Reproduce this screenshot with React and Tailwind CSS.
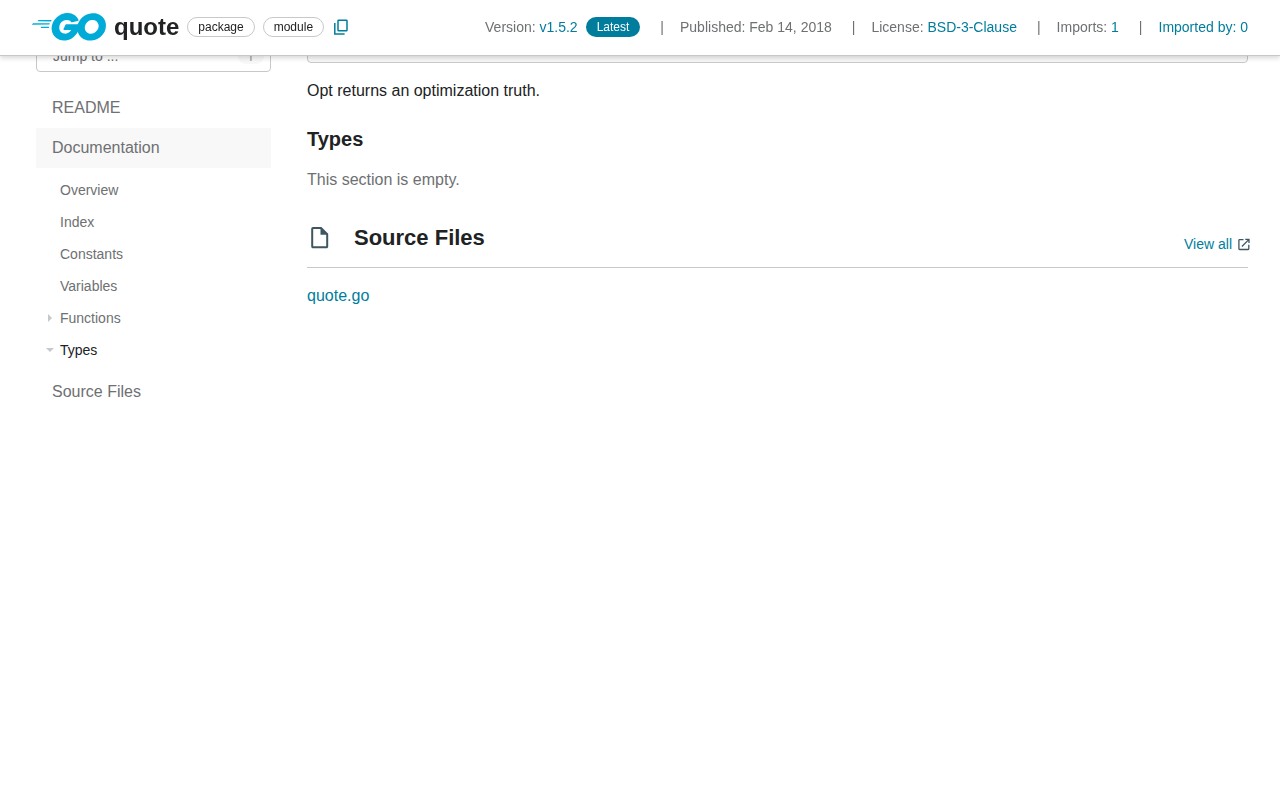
import React from "react";

function GoLogo() {
  return (
    <svg className="w-[74px] h-[28px]" viewBox="24.7 78.4 205.6 76.8" fill="#00acd7" aria-hidden="true">
      <path d="M40.2,101.1c-0.4,0-0.5-0.2-0.3-0.5l2.1-2.7c0.2-0.3,0.7-0.5,1.1-0.5l35.7,0c0.4,0,0.5,0.3,0.3,0.6l-1.7,2.6c-0.2,0.3-0.7,0.6-1,0.6L40.2,101.1z" />
      <path d="M25.1,110.3c-0.4,0-0.5-0.2-0.3-0.5l2.1-2.7c0.2-0.3,0.7-0.5,1.1-0.5l45.6,0c0.4,0,0.6,0.3,0.5,0.6l-0.8,2.4c-0.1,0.4-0.5,0.6-0.9,0.6L25.1,110.3z" />
      <path d="M49.3,119.5c-0.4,0-0.5-0.3-0.3-0.6l1.4-2.5c0.2-0.3,0.6-0.6,1-0.6l20,0c0.4,0,0.6,0.3,0.6,0.7l-0.2,2.4c0,0.4-0.4,0.7-0.7,0.7L49.3,119.5z" />
      <path d="M153.1,99.3c-6.3,1.6-10.6,2.8-16.8,4.4c-1.5,0.4-1.6,0.5-2.9-1c-1.5-1.7-2.6-2.8-4.7-3.8c-6.3-3.1-12.4-2.2-18.1,1.5c-6.8,4.4-10.3,10.9-10.2,19c0.1,8,5.6,14.6,13.5,15.7c6.8,0.9,12.5-1.5,17-6.6c0.9-1.1,1.7-2.3,2.7-3.7c-3.6,0-8.1,0-19.3,0c-2.1,0-2.6-1.3-1.9-3c1.3-3.1,3.7-8.3,5.1-10.9c0.3-0.6,1-1.6,2.5-1.6c5.1,0,23.9,0,36.4,0c-0.2,2.7-0.2,5.4-0.6,8.1c-1.1,7.2-3.8,13.8-8.2,19.6c-7.2,9.5-16.6,15.4-28.5,17c-9.8,1.3-18.9-0.6-26.9-6.6c-7.4-5.6-11.6-13-12.7-22.2c-1.3-10.9,1.9-20.7,8.5-29.3c7.1-9.3,16.5-15.2,28-17.3c9.4-1.7,18.4-0.6,26.5,4.9c5.3,3.5,9.1,8.3,11.6,14.1C154.7,98.5,154.3,99,153.1,99.3z" />
      <path d="M186.2,154.6c-9.1-0.2-17.4-2.8-24.4-8.8c-5.9-5.1-9.6-11.6-10.8-19.3c-1.8-11.3,1.3-21.3,8.1-30.2c7.3-9.6,16.1-14.6,28-16.7c10.2-1.8,19.8-0.8,28.5,5.1c7.9,5.4,12.8,12.7,14.1,22.3c1.7,13.5-2.2,24.5-11.5,33.9c-6.6,6.7-14.7,10.9-24,12.8C191.5,154.2,188.8,154.3,186.2,154.6z M210,114.2c-0.1-1.3-0.1-2.3-0.3-3.3c-1.8-9.9-10.9-15.5-20.4-13.3c-9.3,2.1-15.3,8-17.5,17.4c-1.8,7.8,2,15.7,9.2,18.9c5.5,2.4,11,2.1,16.3-0.6C205.2,129.2,209.5,122.8,210,114.2z" />
    </svg>
  );
}

function Link({ children }) {
  return <a href="#" className="text-[#007d9c]">{children}</a>;
}

function Chip({ children }) {
  return (
    <span className="h-5 flex items-center px-[10px] rounded-full border border-[#c6c8ca] text-xs text-[#202224]">
      {children}
    </span>
  );
}

function Divider() {
  return <span className="px-4" aria-hidden="true">|</span>;
}

function Header() {
  return (
    <header className="fixed inset-x-0 top-0 z-10 h-14 px-8 pb-[2px] flex items-center justify-between bg-white border-b border-[#c6c8ca] shadow-[0_2px_5px_rgba(0,0,0,0.16)]">
      <div className="flex items-center gap-2">
        <a href="#" aria-label="Go home"><GoLogo /></a>
        <h1 className="text-2xl font-bold text-[#202224]">quote</h1>
        <Chip>package</Chip>
        <Chip>module</Chip>
        <button aria-label="Copy path" className="flex pl-[2px]">
          <svg className="w-4 h-4" viewBox="0 0 16 16" fill="none" stroke="#007d9c" strokeWidth="1.5">
            <rect x="4" y="1.2" width="9" height="10.6" rx="0.6" />
            <path d="M0.8 4v11h9.8" />
          </svg>
        </button>
      </div>
      <div className="flex items-center text-sm text-[#6e7072]">
        <span>Version: <Link>v1.5.2</Link></span>
        <span className="ml-2 mr-1 h-5 px-[11px] flex items-center rounded-full bg-[#007d9c] text-xs text-white">Latest</span>
        <Divider />
        <span>Published: Feb 14, 2018</span>
        <span className="pl-1"><Divider /></span>
        <span>License: <Link>BSD-3-Clause</Link></span>
        <span className="pl-1"><Divider /></span>
        <span>Imports: <Link>1</Link></span>
        <span className="pl-1"><Divider /></span>
        <Link>Imported by: 0</Link>
      </div>
    </header>
  );
}

function Sidebar() {
  const items = ["Overview", "Index", "Constants", "Variables", "Functions", "Types"];
  return (
    <aside className="w-[235px] shrink-0 text-[#6e7072]">
      <label className="mt-2 flex items-center h-8 pl-4 pr-[6px] rounded border border-[#c6c8ca] text-sm">
        <input aria-label="Jump to" placeholder="Jump to ..." className="min-w-0 flex-1 outline-none placeholder:text-[#6e7072]" />
        <kbd className="w-[26px] h-4 flex items-center justify-center rounded-full bg-[#f8f8f8] font-[Liberation_Sans,sans-serif] text-sm text-[#a0a2a4]">f</kbd>
      </label>
      <nav className="pt-4">
        <a href="#readme" className="h-10 px-4 flex items-center">README</a>
        <a href="#documentation" className="h-10 px-4 flex items-center bg-[#f8f8f8]">Documentation</a>
        <ul className="py-[6px] text-sm">
          {items.map((name) => (
            <li key={name}>
              <a href={"#" + name} className={"h-8 flex items-center " + (name === "Types" ? "text-[#202224]" : "")}>
                <span className="w-6 pl-[9px]">
                  {name === "Functions" && (
                    <svg className="w-[10px] h-[10px]" viewBox="0 0 10 10" fill="#c6c8ca"><path d="M3 1l4 4-4 4z" /></svg>
                  )}
                  {name === "Types" && (
                    <svg className="w-[10px] h-[10px]" viewBox="0 0 10 10" fill="#c6c8ca"><path d="M1 3l4 4 4-4z" /></svg>
                  )}
                </span>
                {name}
              </a>
            </li>
          ))}
        </ul>
        <a href="#files" className="h-10 px-4 flex items-center">Source Files</a>
      </nav>
    </aside>
  );
}

export default function App() {
  return (
    <div className="bg-white text-base text-[#202224] font-[Liberation_Sans,Arial,sans-serif]">
      <Header />
      <div className="pt-8 pl-9 pr-8 flex gap-9">
        <Sidebar />
        <main className="flex-1 min-w-0">
          <div className="h-[31px] rounded border border-[#c6c8ca] bg-[#f8f8f8]" />
          <p className="pt-4">Opt returns an optimization truth.</p>
          <h2 className="pt-6 text-xl leading-[25px] font-bold">Types</h2>
          <p className="pt-4 text-[#6e7072]">This section is empty.</p>
          <div className="mt-6 h-[52px] flex items-start border-b border-[#c6c8ca]">
            <h2 className="flex-1 flex items-center pt-[6px] text-[22px] leading-8 font-bold">
              <svg className="w-[47px] h-6" viewBox="0 0 47 24" fill="none" stroke="#3e5661" strokeWidth="2">
                <path d="M6 2h8l6.2 6.2V20.5a.8.8 0 0 1-.8.8H6a.8.8 0 0 1-.8-.8V2.8A.8.8 0 0 1 6 2z" />
                <path d="M13.5 2v6.7h6.7z" fill="#3e5661" stroke="none" />
              </svg>
              Source Files
            </h2>
            <a href="#" className="pt-[18px] -mr-1 flex items-center gap-1 text-sm text-[#007d9c]">
              View all
              <svg className="w-4 h-4" viewBox="0 0 16 16" fill="none" stroke="#3e5661" strokeWidth="1.3">
                <path d="M7.5 3.6H3.6a.7.7 0 0 0-.7.7v8.5c0 .4.3.7.7.7h8.5a.7.7 0 0 0 .7-.7V8.8M9.3 3.4h3.7v3.7M13 3.4L5.900 10.5" />
              </svg>
            </a>
          </div>
          <p className="pt-4"><Link>quote.go</Link></p>
        </main>
      </div>
    </div>
  );
}
